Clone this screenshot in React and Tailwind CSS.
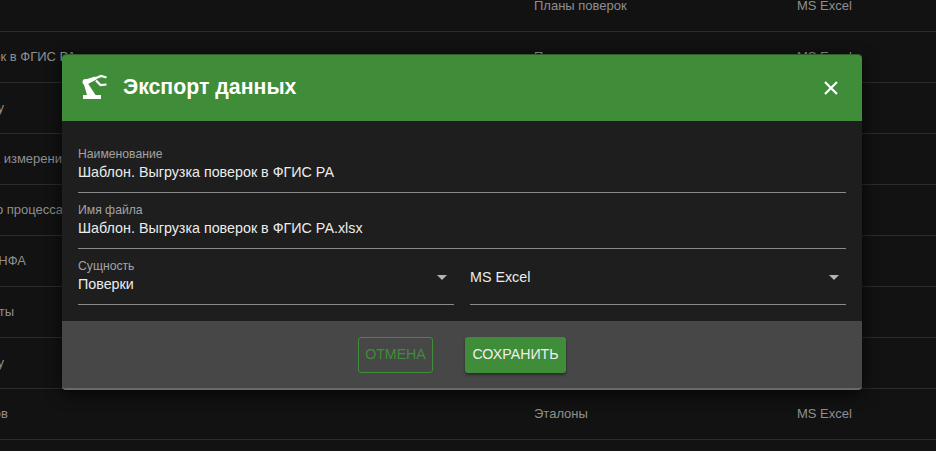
const rows = [
  { end: "w-[0px]", text: "", type: "Планы поверок", fmt: "MS Excel" },
  { end: "w-[76px]", text: "Выгрузка поверок в ФГИС РА", type: "Планы поверок", fmt: "MS Excel" },
  { end: "w-[4px]", text: "Отчёт по поверку", type: "Планы поверок", fmt: "MS Excel" },
  { end: "w-[69px]", text: "Средства измерения", type: "Планы поверок", fmt: "MS Excel" },
  { end: "w-[63px]", text: "Этапы рабочего процесса", type: "Планы поверок", fmt: "MS Excel" },
  { end: "w-[26px]", text: "Выгрузка НФА", type: "Планы поверок", fmt: "MS Excel" },
  { end: "w-[14px]", text: "Документы", type: "Планы поверок", fmt: "MS Excel" },
  { end: "w-[4px]", text: "Отчёт по поверку", type: "Планы поверок", fmt: "MS Excel" },
  { end: "w-[8px]", text: "Реестр эталонов", type: "Эталоны", fmt: "MS Excel" },
];

function Field({ label, value, caret }) {
  return (
    <div className="relative h-[48px] border-b border-[#8a8a8a] flex flex-col justify-end pb-[11px]">
      <div className="text-[12.2px] leading-[14px] text-[#a3a3a3]">{label}</div>
      <div className="text-[14.3px] leading-[18px] mt-[2px] text-[#ececec]">{value}</div>
      {caret && <Caret className="absolute right-[7px] top-[18px]" />}
    </div>
  );
}

function Caret({ className }) {
  return <div className={`w-0 h-0 border-x-[5.5px] border-x-transparent border-t-[5px] border-t-[#b4b4b4] ${className}`} />;
}

export default function App() {
  return (
    <div className="relative w-[936px] h-[451px] overflow-hidden bg-[#121212] font-['Liberation_Sans',Arial,sans-serif]">
      <div className="-mt-[19px]">
        {rows.map((r, i) => (
          <div key={i} className="h-[51px] border-b border-[#2b2b2b] flex items-center text-[13px] text-[#8f8f8f] whitespace-nowrap">
            <div className={`${r.end} flex justify-end shrink-0`}>{r.text}</div>
            <div className="flex-1" />
            <div className="w-[263px] shrink-0">{r.type}</div>
            <div className="w-[139px] shrink-0">{r.fmt}</div>
          </div>
        ))}
      </div>

      <div className="absolute left-[62px] top-[55px] w-[800px] h-[335px] rounded-[4px] flex flex-col bg-[#1e1e1e] shadow-[0_-1px_0_#2f5f2b,0_4px_16px_rgba(0,0,0,0.7)]">
        <div className="h-[66px] shrink-0 rounded-t-[4px] bg-[#3f8c39] flex items-center pl-[18px] pr-[24px]">
          <svg width="28" height="28" viewBox="0 0 28 28" fill="white" className="shrink-0">
            <circle cx="5.5" cy="8" r="3" />
            <path d="M5.5 5.5 L15 2.5 L16.5 5.5 L8 10 Z" />
            <path d="M3.8 10 L8 9.5 L15.5 21 L7 21 Z" />
            <rect x="3" y="21" width="18" height="4" />
            <path d="M15 4.5 L21 2 L26.5 3.5 M16 6.5 L20.5 11 L26.5 10.5" fill="none" stroke="white" strokeWidth="2.2" />
          </svg>
          <div className="ml-[15px] text-[21.3px] font-bold text-white flex-1">Экспорт данных</div>
          <svg width="14" height="14" viewBox="0 0 14 14" stroke="white" strokeWidth="2.2" className="shrink-0">
            <path d="M1 1 L13 13 M13 1 L1 13" />
          </svg>
        </div>

        <div className="flex-1 px-[16px] pt-[24px] flex flex-col gap-[8px]">
          <Field label="Наименование" value="Шаблон. Выгрузка поверок в ФГИС РА" />
          <Field label="Имя файла" value="Шаблон. Выгрузка поверок в ФГИС РА.xlsx" />
          <div className="grid grid-cols-2 gap-[16px]">
            <Field label="Сущность" value="Поверки" caret />
            <div className="relative h-[48px] border-b border-[#8a8a8a] flex items-center pb-[6px]">
              <div className="text-[14.3px] text-[#ececec]">MS Excel</div>
              <Caret className="absolute right-[7px] top-[18px]" />
            </div>
          </div>
        </div>

        <div className="h-[69px] shrink-0 rounded-b-[4px] bg-[#474747] border-b-2 border-[#6a6a6a] flex items-center justify-center gap-[32px]">
          <button className="h-[36px] w-[75px] rounded-[3px] border border-[#3f8c39] text-[14.2px] text-[#3f8c39]">ОТМЕНА</button>
          <button className="h-[36px] w-[101px] rounded-[3px] bg-[#3f8c39] text-[14.2px] text-[#f0f0f0] shadow-[0_2px_3px_rgba(0,0,0,0.4)]">СОХРАНИТЬ</button>
        </div>
      </div>
    </div>
  );
}
